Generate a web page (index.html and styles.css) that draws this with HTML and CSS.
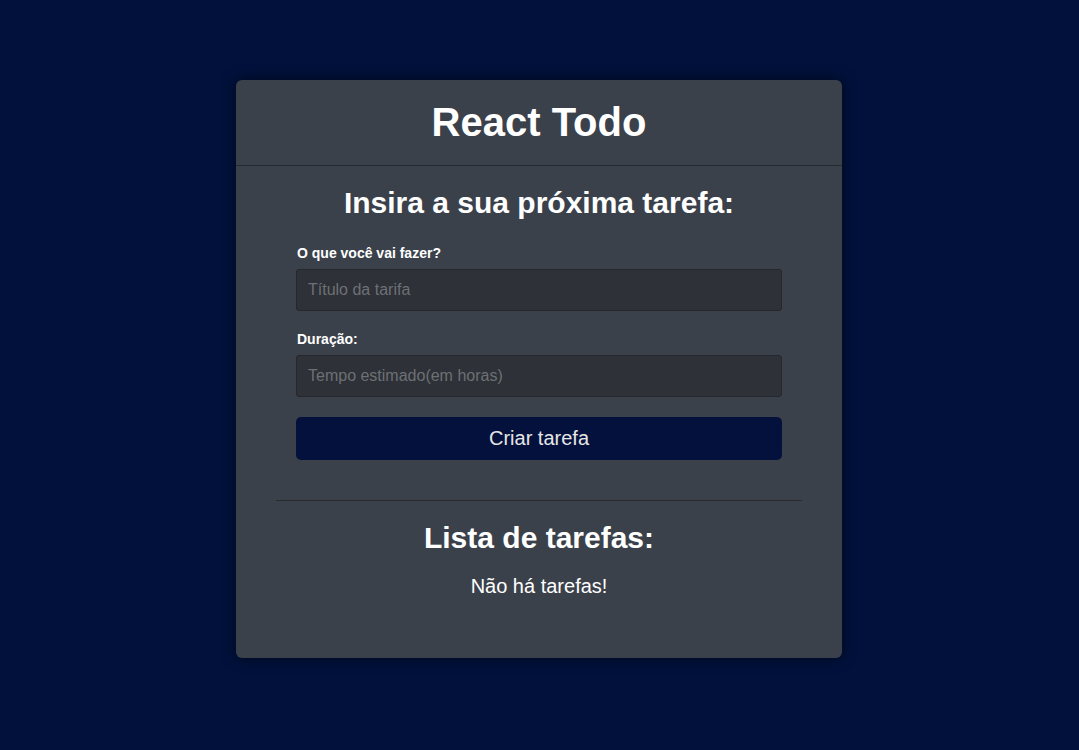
FILE: index.html
```html
<!DOCTYPE html>
<html lang="pt">
<head>
<meta charset="utf-8">
<title>React Todo</title>
<link rel="stylesheet" href="styles.css">
</head>
<body>
<main class="page">
  <div class="card">
    <header class="card-header">
      <h1 class="title">React Todo</h1>
    </header>
    <section class="card-body">
      <h2 class="section-title">Insira a sua próxima tarefa:</h2>
      <form class="task-form">
        <label class="field-label" for="title">O que você vai fazer?</label>
        <input class="field-input" id="title" type="text" placeholder="Título da tarifa">
        <label class="field-label second" for="hours">Duração:</label>
        <input class="field-input" id="hours" type="text" placeholder="Tempo estimado(em horas)">
        <button class="submit-btn" type="button">Criar tarefa</button>
      </form>
      <hr class="divider">
      <h2 class="section-title list-title">Lista de tarefas:</h2>
      <p class="empty">Não há tarefas!</p>
    </section>
  </div>
</main>
</body>
</html>
```
FILE: styles.css
```css
* { box-sizing: border-box; }
html, body { margin: 0; padding: 0; }
body {
  background: #01113b;
  font-family: "Liberation Sans", Arial, sans-serif;
  color: #fff;
  min-height: 750px;
}
.page {
  padding: 80px 1px 0 0;
}
.card {
  width: 606px;
  margin: 0 auto;
  background: #3b414b;
  border-radius: 6px;
  box-shadow: 0 0 14px rgba(0, 0, 0, 0.55);
}
.card-header {
  height: 86px;
  padding-bottom: 2px;
  display: flex;
  align-items: center;
  justify-content: center;
  border-bottom: 1px solid #272a30;
}
.title {
  margin: 0;
  font-size: 40px;
  line-height: 46px;
  font-weight: 700;
}
.card-body {
  padding: 0 40px 60px;
  display: flex;
  flex-direction: column;
}
.section-title {
  margin: 20px 0 0;
  font-size: 30px;
  line-height: 34px;
  font-weight: 700;
  text-align: center;
}
.task-form {
  margin: 25px 20px 0;
  display: flex;
  flex-direction: column;
}
.field-label {
  font-size: 14px;
  line-height: 16px;
  font-weight: 700;
  padding-left: 1px;
}
.field-label.second {
  margin-top: 20px;
}
.field-input {
  margin-top: 8px;
  height: 42px;
  background: #2e3137;
  border: 1px solid #24272b;
  border-radius: 3px;
  padding: 0 11px;
  font-family: inherit;
  font-size: 16px;
  color: #ddd;
  outline: none;
}
.field-input::placeholder {
  color: #6d7075;
}
.submit-btn {
  margin-top: 20px;
  height: 43px;
  background: #05113d;
  border: none;
  border-radius: 5px;
  color: #e6e6e6;
  font-family: inherit;
  font-size: 20px;
  cursor: pointer;
}
.divider {
  margin: 40px 0 0;
  border: none;
  border-top: 1px solid #2b2b2e;
  height: 0;
}
.list-title {
  margin-top: 20px;
}
.empty {
  margin: 20px 0 0;
  font-size: 20px;
  line-height: 23px;
  text-align: center;
}
```
